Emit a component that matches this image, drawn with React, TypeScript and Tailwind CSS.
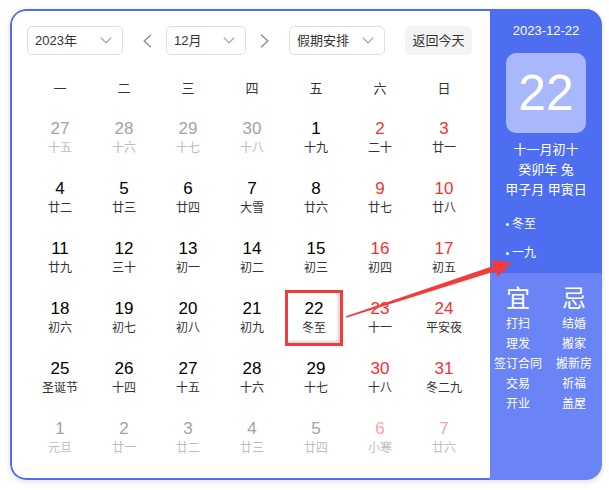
import React from "react";

type Day = { n: number; l: string; kind: "cur" | "red" | "gray" | "grayred"; sel?: boolean };

const rows: Day[][] = [
  [
    { n: 27, l: "十五", kind: "gray" },
    { n: 28, l: "十六", kind: "gray" },
    { n: 29, l: "十七", kind: "gray" },
    { n: 30, l: "十八", kind: "gray" },
    { n: 1, l: "十九", kind: "cur" },
    { n: 2, l: "二十", kind: "red" },
    { n: 3, l: "廿一", kind: "red" },
  ],
  [
    { n: 4, l: "廿二", kind: "cur" },
    { n: 5, l: "廿三", kind: "cur" },
    { n: 6, l: "廿四", kind: "cur" },
    { n: 7, l: "大雪", kind: "cur" },
    { n: 8, l: "廿六", kind: "cur" },
    { n: 9, l: "廿七", kind: "red" },
    { n: 10, l: "廿八", kind: "red" },
  ],
  [
    { n: 11, l: "廿九", kind: "cur" },
    { n: 12, l: "三十", kind: "cur" },
    { n: 13, l: "初一", kind: "cur" },
    { n: 14, l: "初二", kind: "cur" },
    { n: 15, l: "初三", kind: "cur" },
    { n: 16, l: "初四", kind: "red" },
    { n: 17, l: "初五", kind: "red" },
  ],
  [
    { n: 18, l: "初六", kind: "cur" },
    { n: 19, l: "初七", kind: "cur" },
    { n: 20, l: "初八", kind: "cur" },
    { n: 21, l: "初九", kind: "cur" },
    { n: 22, l: "冬至", kind: "cur", sel: true },
    { n: 23, l: "十一", kind: "red" },
    { n: 24, l: "平安夜", kind: "red" },
  ],
  [
    { n: 25, l: "圣诞节", kind: "cur" },
    { n: 26, l: "十四", kind: "cur" },
    { n: 27, l: "十五", kind: "cur" },
    { n: 28, l: "十六", kind: "cur" },
    { n: 29, l: "十七", kind: "cur" },
    { n: 30, l: "十八", kind: "red" },
    { n: 31, l: "冬二九", kind: "red" },
  ],
  [
    { n: 1, l: "元旦", kind: "gray" },
    { n: 2, l: "廿一", kind: "gray" },
    { n: 3, l: "廿二", kind: "gray" },
    { n: 4, l: "廿三", kind: "gray" },
    { n: 5, l: "廿四", kind: "gray" },
    { n: 6, l: "小寒", kind: "grayred" },
    { n: 7, l: "廿六", kind: "grayred" },
  ],
];

const weekdays = ["一", "二", "三", "四", "五", "六", "日"];

function Chevron() {
  return (
    <svg width="12" height="7" viewBox="0 0 12 7" fill="none">
      <polyline points="0.8,0.8 6,5.8 11.2,0.8" stroke="#a8abb2" strokeWidth="1.3" />
    </svg>
  );
}

function Select({ label, w }: { label: string; w: string }) {
  return (
    <div
      className={`${w} h-[29px] flex items-center justify-between pl-[7px] pr-[10px] border border-[#dcdfe6] rounded-[5px] text-[13px] text-[#333]`}
    >
      <span>{label}</span>
      <Chevron />
    </div>
  );
}

function Arrow({ dir }: { dir: "l" | "r" }) {
  return (
    <svg width="9" height="14" viewBox="0 0 9 14" fill="none">
      {dir === "l" ? (
        <polyline points="8,0.8 1.2,7 8,13.2" stroke="#909399" strokeWidth="1.5" />
      ) : (
        <polyline points="1,0.8 7.8,7 1,13.2" stroke="#909399" strokeWidth="1.5" />
      )}
    </svg>
  );
}

function Cell({ d }: { d: Day }) {
  const numColor =
    d.kind === "cur"
      ? "text-black"
      : d.kind === "red"
      ? "text-[#f73131]"
      : d.kind === "gray"
      ? "text-[#a3a3a3]"
      : "text-[#f7a5a5]";
  const lunColor = d.kind === "gray" || d.kind === "grayred" ? "text-[#bdbdbd]" : "text-[#333]";
  const inner = (
    <>
      <span className={`text-[17px] leading-[20px] ${numColor}`}>{d.n}</span>
      <span className={`text-[12px] leading-[18px] ${lunColor}`}>{d.l}</span>
    </>
  );
  return (
    <div className="h-[60px] flex items-center justify-center">
      {d.sel ? (
        <div className="w-[58px] h-[56px] -ml-[4px] -mt-[1px] border-[3px] border-[#f23c3c] shadow-[inset_-2px_-2px_3px_rgba(0,0,0,0.18)] flex flex-col items-center justify-center">
          {inner}
        </div>
      ) : (
        <div className="flex flex-col items-center">{inner}</div>
      )}
    </div>
  );
}

export default function App() {
  const yi = ["打扫", "理发", "签订合同", "交易", "开业"];
  const ji = ["结婚", "搬家", "搬新房", "祈福", "盖屋"];
  return (
    <div
      className="relative w-[609px] h-[490px] bg-white pt-[9px] pl-[10px]"
      style={{ fontFamily: '"Liberation Sans", "Noto Sans CJK SC", sans-serif' }}
    >
      <div className="flex w-[592px] h-[471px] rounded-[16px] overflow-hidden shadow-[0_2px_6px_rgba(0,0,0,0.12)]">
        {/* left */}
        <div className="w-[480px] h-full border-2 border-r-0 border-[#4e6ef2] rounded-l-[16px] pl-[15px] pt-[15px] bg-white">
          <div className="flex items-center h-[29px]">
            <Select label="2023年" w="w-[96px]" />
            <div className="ml-[20px] flex items-center">
              <Arrow dir="l" />
            </div>
            <div className="ml-[14px]">
              <Select label="12月" w="w-[80px]" />
            </div>
            <div className="ml-[14px] flex items-center">
              <Arrow dir="r" />
            </div>
            <div className="ml-[20px]">
              <Select label="假期安排" w="w-[96px]" />
            </div>
            <div className="ml-[20px] w-[67px] h-[29px] rounded-[6px] bg-[#f4f4f5] text-[13px] text-[#333] flex items-center justify-center">
              返回今天
            </div>
          </div>
          <div className="mt-[15px] ml-[1px] w-[448px] h-[38px] grid grid-cols-7 items-center">
            {weekdays.map((w) => (
              <div key={w} className="text-center text-[13px] text-[#333]">
                {w}
              </div>
            ))}
          </div>
          <div className="ml-[1px] w-[448px] grid grid-cols-7">
            {rows.flat().map((d, i) => (
              <Cell key={i} d={d} />
            ))}
          </div>
        </div>
        {/* right */}
        <div className="w-[112px] h-full flex flex-col text-white">
          <div className="h-[264px] bg-[#4e6ef2] flex flex-col">
            <div className="pt-[13px] text-[13px] leading-[18px] text-center">2023-12-22</div>
            <div className="mt-[13px] mx-auto w-[80px] h-[80px] rounded-[10px] bg-[#a9b8fa] flex items-center justify-center text-[50px] leading-none">
              22
            </div>
            <div className="mt-[7px] text-[13px] leading-[20px] text-center">
              <div>十一月初十</div>
              <div>癸卯年 兔</div>
              <div>甲子月 甲寅日</div>
            </div>
            <div className="mt-[14px] pl-[16px] flex flex-col gap-[9px] text-[12px] leading-[20px]">
              <div className="flex items-center">
                <span className="w-[3px] h-[3px] rounded-full bg-white mr-[3px]" />
                冬至
              </div>
              <div className="flex items-center">
                <span className="w-[3px] h-[3px] rounded-full bg-white mr-[3px]" />
                一九
              </div>
            </div>
          </div>
          <div className="flex-1 bg-[#6a84f6] grid grid-cols-2 content-start pt-[12px]">
            <div className="flex flex-col items-center">
              <div className="text-[24px] leading-[28px] mb-[1px]">宜</div>
              {yi.map((t) => (
                <div key={t} className="text-[12px] leading-[20px] whitespace-nowrap">
                  {t}
                </div>
              ))}
            </div>
            <div className="flex flex-col items-center">
              <div className="text-[24px] leading-[28px] mb-[1px]">忌</div>
              {ji.map((t) => (
                <div key={t} className="text-[12px] leading-[20px] whitespace-nowrap">
                  {t}
                </div>
              ))}
            </div>
          </div>
        </div>
      </div>
      {/* annotation arrow */}
      <svg className="absolute left-0 top-0 pointer-events-none" width="609" height="490" viewBox="0 0 609 490">
        <polygon
          points="345.8,316.3 493.9,265.8 491.9,259.8 511.5,262.8 497.6,277 495.9,271.1 346.3,317.8"
          fill="#f23c3c"
        />
      </svg>
    </div>
  );
}
